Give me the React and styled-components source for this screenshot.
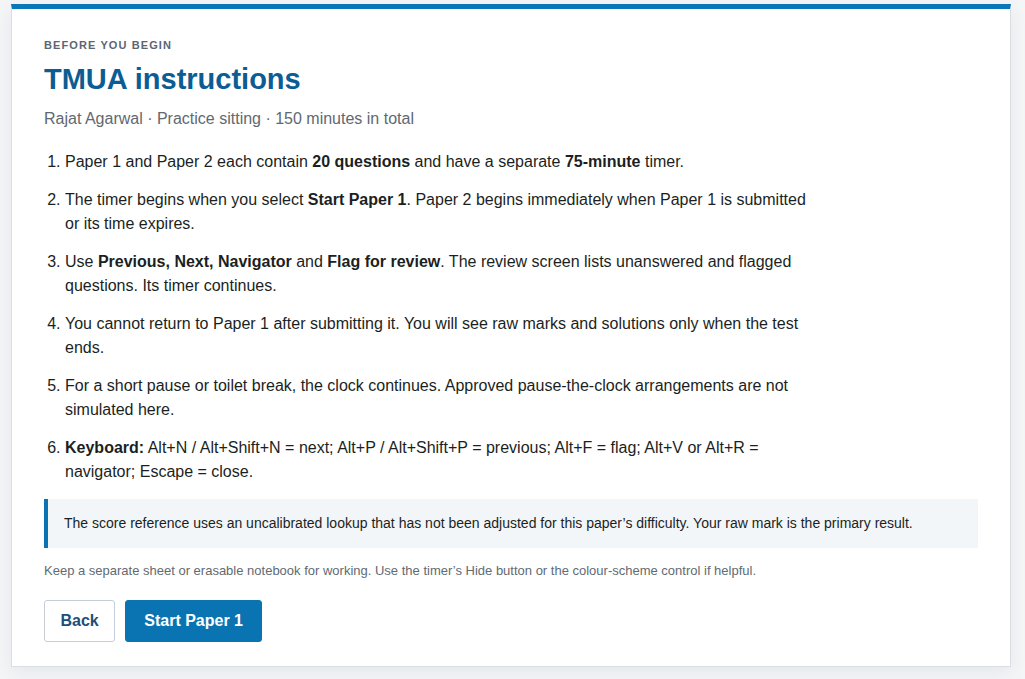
import styled, { createGlobalStyle } from "styled-components";

const GlobalStyle = createGlobalStyle`
  html, body {
    margin: 0;
    padding: 0;
    background: #f3f5f7;
    font-family: "Liberation Sans", Arial, sans-serif;
    color: #1b1f23;
  }
`;

const Page = styled.div`
  padding: 4px 14px 12px 11px;
`;

const Card = styled.section`
  background: #fff;
  border: 1px solid #d9dee3;
  border-top: 5px solid #0a78b8;
  box-shadow: 0 6px 18px rgba(20, 40, 60, 0.06);
  padding: 30px 32px 24px;
`;

const Eyebrow = styled.div`
  font-size: 11px;
  font-weight: 700;
  letter-spacing: 1.1px;
  color: #5b6673;
  text-transform: uppercase;
`;

const Title = styled.h1`
  margin: 9px 0 0;
  font-size: 29px;
  line-height: 38px;
  font-weight: 700;
  color: #0b5d93;
`;

const Meta = styled.p`
  margin: 9px 0 0;
  font-size: 16px;
  line-height: 24px;
  color: #606970;
`;

const Steps = styled.ol`
  margin: 19px 0 0;
  padding-left: 21px;
  max-width: 750px;
  font-size: 16px;
  line-height: 24px;

  li {
    margin-bottom: 14px;
  }

  li:last-child {
    margin-bottom: 0;
  }

  strong {
    font-weight: 700;
  }
`;

const Callout = styled.div`
  margin-top: 15px;
  background: #f3f6f9;
  border-left: 4px solid #0a74b3;
  padding: 13px 16px 14px;
  font-size: 14px;
  line-height: 22px;
  color: #1b1f23;
`;

const Note = styled.p`
  margin: 14px 0 0;
  font-size: 13px;
  line-height: 18px;
  color: #626a72;
`;

const Actions = styled.div`
  display: flex;
  gap: 10px;
  margin-top: 20px;
`;

const Button = styled.button`
  height: 42px;
  padding: 0 ${(p) => (p.$primary ? "18px" : "15.5px")};
  border-radius: 3px;
  font-family: inherit;
  font-size: 16px;
  font-weight: 700;
  cursor: pointer;
  border: 1px solid ${(p) => (p.$primary ? "#0a74b3" : "#c5ced7")};
  background: ${(p) => (p.$primary ? "#0a74b3" : "#fff")};
  color: ${(p) => (p.$primary ? "#fff" : "#1d4f7a")};
`;

export default function App() {
  return (
    <>
      <GlobalStyle />
      <Page>
        <Card>
          <Eyebrow>Before you begin</Eyebrow>
          <Title>TMUA instructions</Title>
          <Meta>Rajat Agarwal · Practice sitting · 150 minutes in total</Meta>
          <Steps>
            <li>
              Paper 1 and Paper 2 each contain <strong>20 questions</strong> and have a separate{" "}
              <strong>75-minute</strong> timer.
            </li>
            <li>
              The timer begins when you select <strong>Start Paper 1</strong>. Paper 2 begins immediately when
              Paper 1 is submitted or its time expires.
            </li>
            <li>
              Use <strong>Previous, Next, Navigator</strong> and <strong>Flag for review</strong>. The review
              screen lists unanswered and flagged questions. Its timer continues.
            </li>
            <li>
              You cannot return to Paper 1 after submitting it. You will see raw marks and solutions only when
              the test ends.
            </li>
            <li>
              For a short pause or toilet break, the clock continues. Approved pause-the-clock arrangements are
              not simulated here.
            </li>
            <li>
              <strong>Keyboard:</strong> Alt+N / Alt+Shift+N = next; Alt+P / Alt+Shift+P = previous; Alt+F =
              flag; Alt+V or Alt+R = navigator; Escape = close.
            </li>
          </Steps>
          <Callout>
            The score reference uses an uncalibrated lookup that has not been adjusted for this paper’s
            difficulty. Your raw mark is the primary result.
          </Callout>
          <Note>
            Keep a separate sheet or erasable notebook for working. Use the timer’s Hide button or the
            colour-scheme control if helpful.
          </Note>
          <Actions>
            <Button>Back</Button>
            <Button $primary>Start Paper 1</Button>
          </Actions>
        </Card>
      </Page>
    </>
  );
}
